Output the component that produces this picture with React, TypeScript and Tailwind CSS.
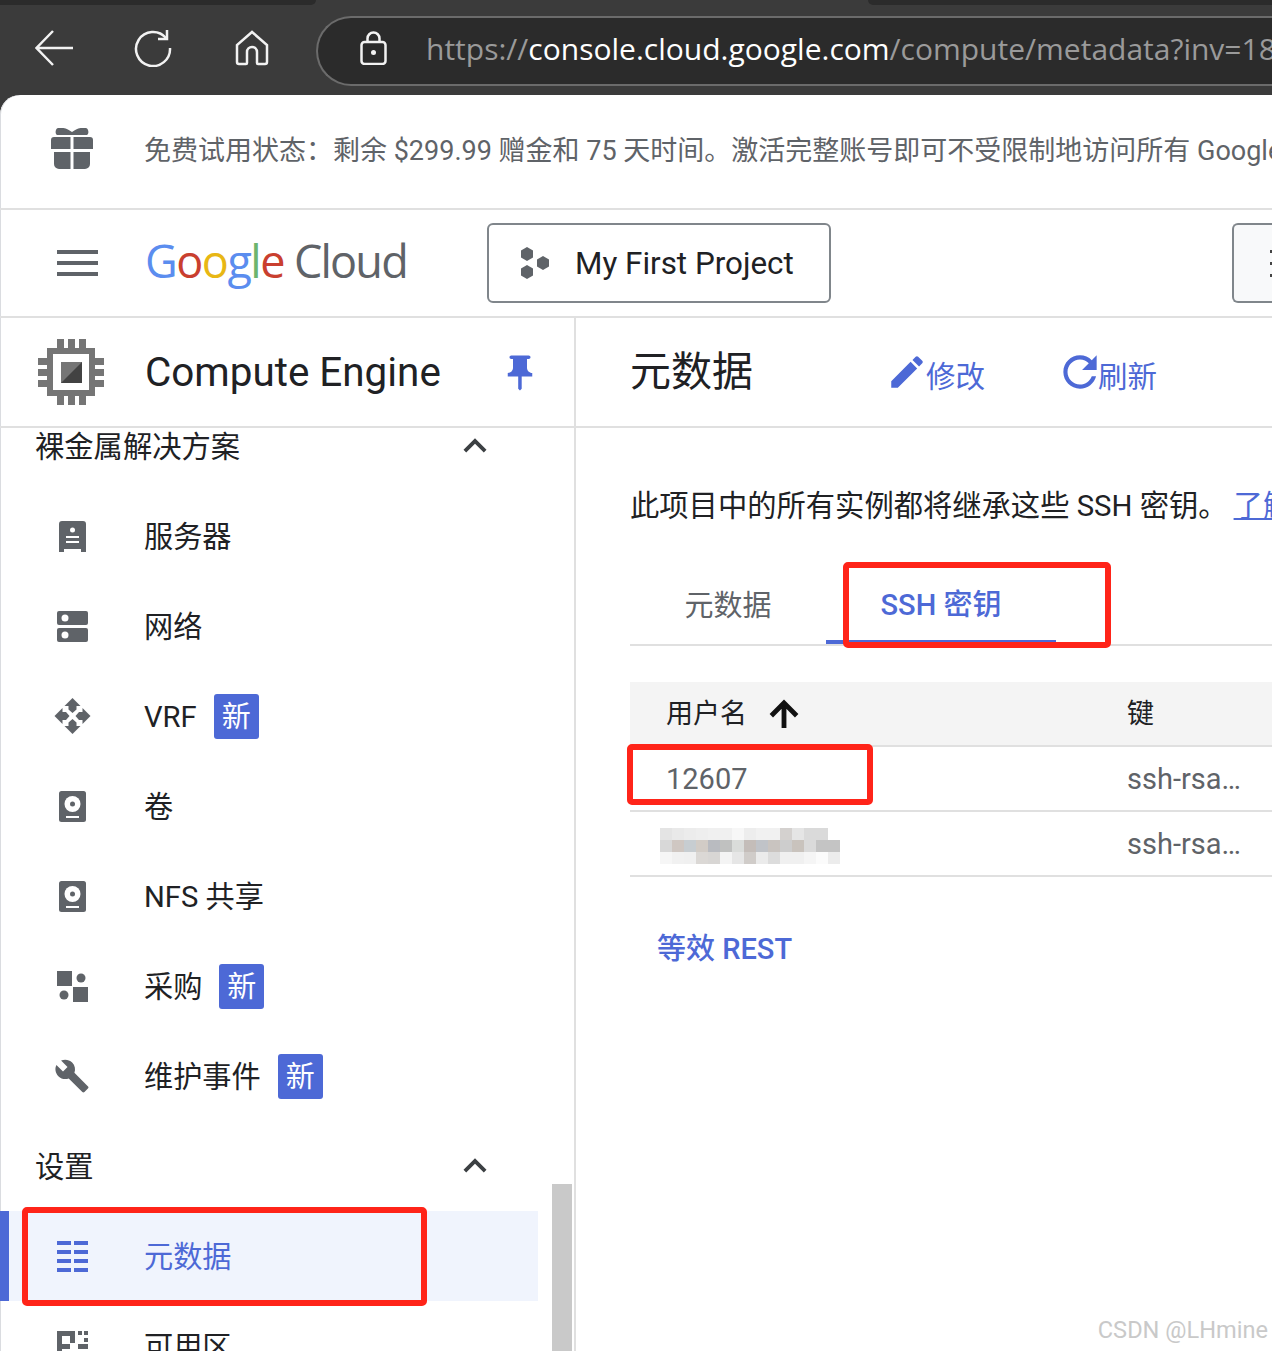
import type { ReactNode } from 'react';

const BLUE = '#4d69d6';

const MOSAIC: string[][] = [
  ['#e4e4e4', '#e9e9e9', '#ececec', '#eeeeee', '#f0f0f0', '#f0f0f0', '#f7f7f7', '#ededed', '#f1f1f1', '#f1f1f1', '#d4d1cf', '#e5e5e5', '#dadada', '#dadada', '#ffffff'],
  ['#d8d8d8', '#cfc7c2', '#c7cdd1', '#d2ccc6', '#b9bbc0', '#c0c1c0', '#dadcda', '#c4bdb9', '#c0c3c8', '#c9c4c0', '#cdcdcd', '#c9c3bd', '#dadada', '#c4c4c4', '#c4c4c4'],
  ['#f6f6f6', '#f1f1f1', '#f0f0f0', '#dbd8d5', '#d8d6d4', '#f4f4f4', '#e6e6e6', '#d0ccc9', '#ebebeb', '#dcdcdc', '#f0f0f0', '#f0f0f0', '#f5f5f5', '#fbfbfb', '#ececec'],
];

function Badge() {
  return (
    <span className="ml-[17px] mt-[1px] flex h-[45px] w-[45px] items-center justify-center rounded-[3px] bg-[#4d69d6] pt-[2px] text-[29px] text-white">
      新
    </span>
  );
}

function NavItem({ icon, label, badge, active }: { icon: ReactNode; label: string; badge?: boolean; active?: boolean }) {
  return (
    <div className={`flex h-[90px] w-[538px] shrink-0 items-center ${active ? 'border-l-[9px] border-[#4d69d6] bg-[#f0f4fd] text-[#4d69d6]' : 'text-[#202124]'}`}>
      <div className={`flex justify-center ${active ? 'mr-[9px] w-[126px]' : 'w-[144px]'}`}>{icon}</div>
      <span className="pt-[4px] text-[29.200px]">{label}</span>
      {badge && <Badge />}
    </div>
  );
}

function SectionRow({ label }: { label: string }) {
  return (
    <div className="flex h-[90px] w-[538px] shrink-0 items-center justify-between pl-[35px] pr-[40px] text-[29.300px] text-[#202124]">
      <span className="pt-[4px]">{label}</span>
      <svg viewBox="0 0 24 24" className="h-[46px] w-[46px]" fill="#3c4043">
        <path d="M12 8l-6 6 1.41 1.41L12 10.83l4.59 4.58L18 14z" />
      </svg>
    </div>
  );
}

const ServerIcon = () => (
  <svg viewBox="0 0 27 31" className="h-[31px] w-[27px]">
    <path d="M3 0h21a3 3 0 0 1 3 3v28h-5v-3H5v3H0V3a3 3 0 0 1 3-3z" fill="#5f6368" />
    <circle cx="13.500" cy="9" r="2.500" fill="#fff" />
    <rect x="7" y="15" width="13" height="2" fill="#fff" />
    <rect x="7" y="20" width="13" height="2" fill="#fff" />
  </svg>
);

const NetworkIcon = () => (
  <svg viewBox="0 0 31 31" className="h-[31px] w-[31px]">
    <rect x="0" y="0" width="31" height="14" rx="2" fill="#5f6368" />
    <rect x="0" y="17" width="31" height="14" rx="2" fill="#5f6368" />
    <circle cx="8" cy="7" r="3.500" fill="#fff" />
    <circle cx="8" cy="24" r="3.500" fill="#fff" />
  </svg>
);

const VrfIcon = () => (
  <svg viewBox="0 0 36 36" className="h-[36px] w-[37px]" fill="#5f6368">
    {[0, 90, 180, 270].map((deg) => (
      <path key={deg} transform={`rotate(${deg} 18 18)`} d="M18 0l8 8h-4v3.500L18 15l-4-3.500V8h-4z" />
    ))}
  </svg>
);

const DiskIcon = () => (
  <svg viewBox="0 0 27 31" className="h-[31px] w-[27px]">
    <rect width="27" height="31" rx="2.500" fill="#5f6368" />
    <circle cx="13.500" cy="13" r="8" fill="#fff" />
    <circle cx="13.500" cy="13" r="2.500" fill="#5f6368" />
    <rect x="7" y="25" width="13" height="2" fill="#fff" />
  </svg>
);

const ProcureIcon = () => (
  <svg viewBox="0 0 31 31" className="h-[31px] w-[31px]" fill="#5f6368">
    <rect x="0" y="0" width="15" height="15" />
    <rect x="16" y="16" width="15" height="15" />
    <circle cx="24" cy="7" r="4.500" />
    <circle cx="7" cy="24" r="4.500" />
  </svg>
);

const WrenchIcon = () => (
  <svg viewBox="0 0 24 24" className="h-[36px] w-[36px]" fill="#5f6368">
    <path d="M22.7 19l-9.100-9.100c.9-2.300.4-5-1.500-6.900-2-2-5-2.400-7.400-1.300L9 6 6 9 1.600 4.700C.4 7.100.9 10.100 2.900 12.100c1.900 1.900 4.600 2.400 6.900 1.500l9.100 9.100c.4.4 1 .4 1.400 0l2.300-2.300c.5-.4.5-1.100.1-1.400z" />
  </svg>
);

const ListIcon = () => (
  <svg viewBox="0 0 31 31" className="h-[31px] w-[31px]" fill={BLUE}>
    {[0, 9, 18, 27].map((y) => (
      <g key={y}>
        <rect x="0" y={y} width="14" height="4" />
        <rect x="17" y={y} width="14" height="4" />
      </g>
    ))}
  </svg>
);

const ZoneIcon = () => (
  <svg viewBox="0 0 31 31" className="h-[31px] w-[31px]" fill="#5f6368">
    <path d="M0 0h18v12h-5V5H5v8h8v5H5v13H0z" />
    <rect x="21" y="0" width="4" height="4" />
    <rect x="27" y="0" width="4" height="4" />
    <rect x="27" y="7" width="4" height="4" />
    <rect x="21" y="13" width="10" height="5" />
    <rect x="13" y="21" width="18" height="4" />
    <rect x="13" y="21" width="5" height="10" />
    <rect x="26" y="21" width="5" height="10" />
  </svg>
);

const ChipIcon = () => (
  <svg viewBox="0 0 66 66" className="h-[66px] w-[66px]">
    {[19, 30, 41].map((p) => (
      <g key={p} fill="#757575">
        <rect x={p} y="0" width="7" height="66" />
        <rect x="0" y={p} width="66" height="7" />
      </g>
    ))}
    <rect x="9" y="9" width="48" height="48" fill="#757575" />
    <rect x="15" y="15" width="36" height="36" fill="#fff" />
    <rect x="23" y="23" width="21" height="21" fill="#757575" />
    <path d="M44 23v21H23z" fill="#424242" />
  </svg>
);

function RedBox({ className }: { className: string }) {
  return <div className={`pointer-events-none absolute rounded-[5px] border-[6px] border-[#ff2419] ${className}`} />;
}

export default function App() {
  return (
    <div className="relative h-[1351px] w-[1272px] overflow-hidden bg-[#3b3b3b] font-['Roboto','Noto_Sans_CJK_SC',sans-serif]">
      {/* browser chrome */}
      <div className="relative flex h-[95px] items-center">
        <div className="absolute left-0 top-0 h-[5px] w-[316px] rounded-br-[8px] bg-[#2b2b2b]" />
        <div className="absolute right-0 top-0 h-[5px] w-[404px] rounded-bl-[8px] bg-[#2b2b2b]" />
        <div className="flex w-[316px] shrink-0 items-center">
          <svg viewBox="0 0 38 36" className="ml-[35px] h-[36px] w-[38px]" fill="none" stroke="#f2f2f2" strokeWidth="2.500">
            <path d="M18 1L1.500 18 18 35M2 18h36" />
          </svg>
          <svg viewBox="0 0 38 38" className="ml-[61px] h-[38px] w-[38px]" fill="none" stroke="#f2f2f2" strokeWidth="2.500">
            <path d="M32 9A17 17 0 1 0 36 19" />
            <path d="M33 1v9h-9" />
          </svg>
          <svg viewBox="0 0 34 36" className="ml-[63px] h-[36px] w-[34px]" fill="none" stroke="#f2f2f2" strokeWidth="2.500">
            <path d="M17 2L2 15v17a2 2 0 0 0 2 2h7a1 1 0 0 0 1-1V22a5 5 0 0 1 10 0v11a1 1 0 0 0 1 1h7a2 2 0 0 0 2-2V15z" />
          </svg>
        </div>
        <div className="mt-[6px] flex h-[70px] flex-1 items-center rounded-l-full border-y-2 border-l-2 border-[#6b6b6b] bg-[#2b2b2b]">
          <svg viewBox="0 0 27 34" className="-mt-[6px] ml-[42px] h-[34px] w-[27px] shrink-0" fill="none" stroke="#f2f2f2" strokeWidth="2.500">
            <path d="M7.500 11V7.500a6 6 0 0 1 12 0V11" />
            <rect x="1.500" y="11" width="24" height="22" rx="3" />
            <circle cx="13.500" cy="21.500" r="2.500" fill="#f2f2f2" stroke="none" />
          </svg>
          <span className="-mt-[4px] ml-[39px] whitespace-nowrap font-['Open_Sans',sans-serif] text-[30px] text-[#9a9a9a]">
            https://<span className="text-white">console.cloud.google.com</span>/compute/metadata?inv=18
          </span>
        </div>
      </div>

      {/* page */}
      <div className="flex h-[1256px] flex-col overflow-hidden rounded-tl-[20px] bg-white shadow-[inset_1px_0_0_#dadce0]">
        <div className="flex h-[115px] shrink-0 items-center border-b-2 border-[#e0e0e0]">
          <div className="flex w-[144px] shrink-0 justify-center">
            <svg viewBox="0 0 42 41" className="-mt-[6px] h-[41px] w-[42px]" fill="#5f6368">
              <path d="M7 0c5-1 10 1 14 4 4-3 9-5 14-4 3 1 3 6 1 7H6C4 6 4 1 7 0z" />
              <path d="M3 9h16.500v12H0v-9a3 3 0 0 1 3-3zM22.500 9H39a3 3 0 0 1 3 3v9H22.500z" />
              <path d="M3 24h16.500v17H8a5 5 0 0 1-5-5zM22.500 24H39v12a5 5 0 0 1-5 5H22.500z" />
            </svg>
          </div>
          <span className="whitespace-nowrap text-[27px] text-[#5f6368]">
            {'免费试用状态\uFF1A剩余 $299.99 赠金和 75 天时间。激活完整账号即可不受限制地访问所有 Google Cloud'}
          </span>
        </div>

        <div className="flex h-[108px] shrink-0 items-center border-b-2 border-[#e0e0e0]">
          <div className="ml-[57px] flex h-[26px] w-[41px] shrink-0 flex-col justify-between">
            <div className="h-[4px] bg-[#5f6368]" />
            <div className="h-[4px] bg-[#5f6368]" />
            <div className="h-[4px] bg-[#5f6368]" />
          </div>
          <div className="ml-[47px] w-[342px] shrink-0 whitespace-nowrap pb-[4px] font-['Open_Sans',sans-serif] text-[45px] font-medium tracking-[-1.500px]">
            <span className="text-[#5b8def]">G</span>
            <span className="text-[#c93f2f]">o</span>
            <span className="text-[#e8b714]">o</span>
            <span className="text-[#5b8def]">g</span>
            <span className="text-[#6db56d]">l</span>
            <span className="text-[#c93f2f]">e</span>
            <span className="ml-[10px] text-[45px] font-normal tracking-[-1.800px] text-[#5f6368]">Cloud</span>
          </div>
          <div className="flex h-[80px] w-[344px] shrink-0 items-center rounded-[6px] border-2 border-[#80868b]">
            <svg viewBox="0 0 30 32" className="ml-[31px] h-[32px] w-[30px]" fill="#5f6368">
              <path d="M7 0l6 3.500v7L7 14l-6-3.500v-7z" />
              <path d="M23 9l6 3.500v7L23 23l-6-3.500v-7z" />
              <path d="M7 18l6 3.500v7L7 32l-6-3.500v-7z" />
            </svg>
            <span className="ml-[25px] pt-[2px] text-[31.400px] text-[#202124]">My First Project</span>
          </div>
          <div className="ml-[401px] flex h-[80px] flex-1 items-center justify-end rounded-l-[6px] border-y-2 border-l-2 border-[#80868b] bg-[#f8f9fa]">
            <div className="flex flex-col gap-[9px]">
              <div className="h-[3px] w-[2px] bg-[#444]" />
              <div className="h-[3px] w-[2px] bg-[#444]" />
              <div className="h-[3px] w-[2px] bg-[#444]" />
            </div>
          </div>
        </div>

        <div className="flex min-h-0 flex-1">
          {/* sidebar */}
          <div className="relative flex w-[576px] shrink-0 flex-col border-r-2 border-[#e0e0e0]">
            <div className="flex h-[110px] shrink-0 items-center border-b-2 border-[#e0e0e0]">
              <div className="ml-[38px] shrink-0">
                <ChipIcon />
              </div>
              <span className="ml-[41px] pt-[2px] text-[40.400px] text-[#202124]">Compute Engine</span>
              <svg viewBox="0 0 24 24" className="ml-[58px] mt-[2px] h-[42px] w-[42px]" fill={BLUE}>
                <path d="M16 9V4h1c.55 0 1-.45 1-1s-.45-1-1-1H7c-.55 0-1 .45-1 1s.45 1 1 1h1v5c0 1.660-1.340 3-3 3v2h5.970v7l1 1 1-1v-7H19v-2c-1.660 0-3-1.340-3-3z" />
              </svg>
            </div>
            <div className="relative flex min-h-0 flex-1 flex-col overflow-hidden">
              <div className="-mt-[27px] flex flex-col">
                <SectionRow label="裸金属解决方案" />
                <NavItem icon={<ServerIcon />} label="服务器" />
                <NavItem icon={<NetworkIcon />} label="网络" />
                <NavItem icon={<VrfIcon />} label="VRF" badge />
                <NavItem icon={<DiskIcon />} label="卷" />
                <NavItem icon={<DiskIcon />} label="NFS 共享" />
                <NavItem icon={<ProcureIcon />} label="采购" badge />
                <NavItem icon={<WrenchIcon />} label="维护事件" badge />
                <SectionRow label="设置" />
                <NavItem icon={<ListIcon />} label="元数据" active />
                <NavItem icon={<ZoneIcon />} label="可用区" />
              </div>
              <div className="absolute bottom-0 left-[552px] top-[756px] w-[20px] bg-[#c9c9c9]" />
            </div>
          </div>

          {/* main */}
          <div className="flex min-w-0 flex-1 flex-col">
            <div className="flex h-[110px] shrink-0 items-center border-b-2 border-[#e0e0e0] pl-[54px]">
              <span className="w-[260px] shrink-0 pt-[2px] text-[41px] text-[#202124]">元数据</span>
              <svg viewBox="0 0 24 24" className="-ml-[4px] h-[42px] w-[42px]" fill={BLUE}>
                <path d="M3 17.250V21h3.750L17.810 9.940l-3.750-3.750L3 17.250zM20.710 7.040c.39-.39.39-1.020 0-1.410l-2.340-2.340c-.39-.39-1.020-.39-1.410 0l-1.830 1.830 3.750 3.750 1.830-1.830z" />
              </svg>
              <span className="-ml-[2px] pt-[10px] text-[29.500px] text-[#4d69d6]">修改</span>
              <svg viewBox="0 0 24 24" className="ml-[70px] h-[50px] w-[50px]" fill={BLUE}>
                <path d="M17.650 6.350C16.200 4.900 14.210 4 12 4c-4.420 0-7.990 3.580-7.990 8s3.570 8 7.990 8c3.730 0 6.840-2.550 7.730-6h-2.080c-.82 2.330-3.040 4-5.650 4-3.310 0-6-2.690-6-6s2.690-6 6-6c1.660 0 3.140.69 4.220 1.780L13 11h7V4l-2.350 2.350z" />
              </svg>
              <span className="-ml-[7px] pt-[10px] text-[29.500px] text-[#4d69d6]">刷新</span>
            </div>

            <div className="flex flex-col pl-[54px]">
              <div className="mt-[58px] flex h-[40px] items-center whitespace-nowrap pt-[2px] text-[29.300px] text-[#202124]">
                此项目中的所有实例都将继承这些 SSH 密钥。
                <span className="ml-[6px] text-[#4d69d6] underline">了解详情</span>
              </div>

              <div className="mt-[40px] flex h-[80px] items-end border-b-2 border-[#e0e0e0]">
                <div className="flex h-full w-[196px] items-center justify-center pt-[4px] text-[29px] text-[#5f6368]">元数据</div>
                <div className="flex h-[78px] w-[230px] items-center justify-center border-b-[4px] border-[#4d69d6] pt-[6px] text-[29px] font-medium text-[#4d69d6]">
                  SSH 密钥
                </div>
              </div>

              <div className="mt-[36px] flex h-[65px] items-center border-b-2 border-[#e0e0e0] bg-[#f4f4f4] text-[27px] text-[#202124]">
                <div className="flex w-[497px] items-center pl-[36px]">
                  <span className="pt-[2px]">用户名</span>
                  <svg viewBox="0 0 24 24" className="ml-[17px] h-[40px] w-[40px]" fill="#111" stroke="#111" strokeWidth="0.900">
                    <path d="M4 12l1.410 1.410L11 7.830V20h2V7.830l5.580 5.590L20 12l-8-8-8 8z" />
                  </svg>
                </div>
                <span className="pt-[2px]">键</span>
              </div>
              <div className="flex h-[65px] items-center border-b-2 border-[#e0e0e0] text-[29px] text-[#5f6368]">
                <div className="w-[497px] pl-[36px] pt-[2px]">12607</div>
                <span className="pt-[2px]">ssh-rsa…</span>
              </div>
              <div className="flex h-[65px] items-center border-b-2 border-[#e0e0e0] text-[29px] text-[#5f6368]">
                <div className="w-[497px] pl-[30px] pt-[4px]">
                  <svg viewBox="0 0 180 36" className="h-[36px] w-[180px]">
                    {MOSAIC.map((row, r) =>
                      row.map((color, c) => <rect key={`${r}-${c}`} x={c * 12} y={r * 12} width="12" height="12" fill={color} />),
                    )}
                  </svg>
                </div>
                <span className="pt-[2px]">ssh-rsa…</span>
              </div>

              <div className="ml-[27px] mt-[51px] text-[29px] font-medium text-[#4d69d6]">等效 REST</div>
            </div>
          </div>
        </div>
      </div>

      {/* annotations */}
      <RedBox className="left-[22px] top-[1207px] h-[99px] w-[405px]" />
      <RedBox className="left-[843px] top-[562px] h-[86px] w-[268px]" />
      <RedBox className="left-[627px] top-[744px] h-[61px] w-[246px]" />
      <div className="absolute right-[4px] top-[1313px] text-[23.600px] text-[#c9c9c9]">CSDN @LHmine</div>
    </div>
  );
}
